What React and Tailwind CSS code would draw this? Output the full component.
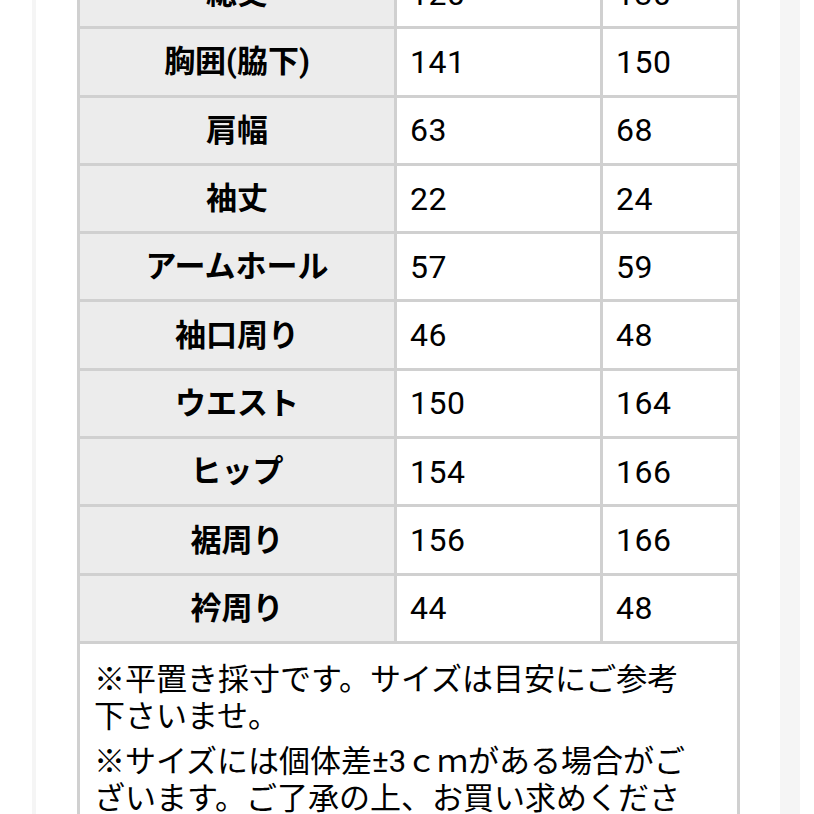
import React from 'react';

const rows = [
  ['総丈', '120', '130'],
  ['胸囲(脇下)', '141', '150'],
  ['肩幅', '63', '68'],
  ['袖丈', '22', '24'],
  ['アームホール', '57', '59'],
  ['袖口周り', '46', '48'],
  ['ウエスト', '150', '164'],
  ['ヒップ', '154', '166'],
  ['裾周り', '156', '166'],
  ['衿周り', '44', '48'],
];

const font = { fontFamily: 'Roboto, "Noto Sans CJK JP", sans-serif' };

const App = () => {
  return (
    <div className="w-[814px] h-[814px] overflow-hidden bg-white" style={font}>
      <div className="ml-[32px] mr-[14px] h-full flex flex-col overflow-hidden border-l-[4px] border-r-[20px] border-[#f5f5f5] bg-white">
        <table className="ml-[41px] -mt-[42px] w-[660px] border-collapse table-fixed text-black">
          <colgroup>
            <col className="w-[317px]" />
            <col className="w-[206px]" />
            <col className="w-[137px]" />
          </colgroup>
          <tbody>
            {rows.map(([label, a, b]) => (
              <tr key={label} className="h-[68.3px]">
                <th className="border-[3px] border-[#d0d0d0] bg-[#ececec] text-center text-[31px] font-bold leading-none">
                  {label}
                </th>
                <td className="border-[3px] border-[#d0d0d0] bg-white pl-[13px] text-[32px] tracking-[0.5px] leading-none">{a}</td>
                <td className="border-[3px] border-[#d0d0d0] bg-white pl-[13px] text-[32px] tracking-[0.5px] leading-none">{b}</td>
              </tr>
            ))}
            <tr>
              <td colSpan={3} className="border-[3px] border-[#d0d0d0] bg-white pl-[14px] pr-[40px] pt-[17px] text-[31px] leading-[37px]">
                <p>※平置き採寸です。サイズは目安にご参考下さいませ。</p>
                <p className="mt-[8px]">※サイズには個体差±3ｃｍがある場合がございます。ご了承の上、お買い求めください。</p>
              </td>
            </tr>
          </tbody>
        </table>
      </div>
    </div>
  );
};

export default App;
